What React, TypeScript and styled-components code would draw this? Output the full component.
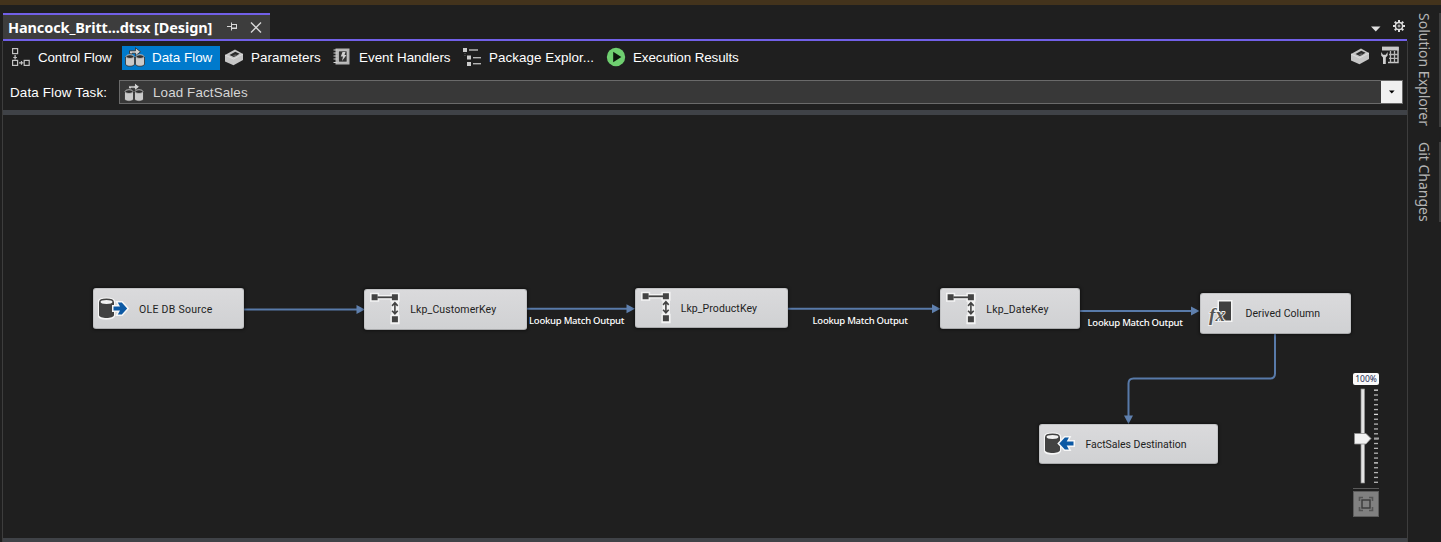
import React from "react";
import styled, { createGlobalStyle } from "styled-components";

const GlobalStyle = createGlobalStyle`
  * { box-sizing: border-box; }
  html, body { margin: 0; padding: 0; background: #1f1f1f; overflow: hidden; }
`;

const ui = `"Liberation Sans", Arial, sans-serif`;
const segoe = `"Noto Sans", "Open Sans", sans-serif`;

const Window = styled.div`
  width: 1441px;
  height: 542px;
  display: flex;
  flex-direction: column;
  background: #1f1f1f;
  color: #fff;
  font-family: ${ui};
  overflow: hidden;
`;

const TopStrip = styled.div`
  height: 5px;
  flex: none;
  background: #43331c;
`;

const Body = styled.div`
  flex: 1;
  display: flex;
  min-height: 0;
`;

const Editor = styled.main`
  width: 1408px;
  display: flex;
  flex-direction: column;
  padding: 8px 0 0 2px;
`;

const TabStrip = styled.div`
  height: 28px;
  flex: none;
  display: flex;
  justify-content: space-between;
  margin: 0 1px;
  border-bottom: 2px solid #7160e8;
`;

const DocumentTab = styled.div`
  width: 267px;
  height: 26px;
  display: flex;
  align-items: center;
  padding-left: 5px;
  border-top: 2px solid #7160e8;
  background: #3d3d3d;
`;

const Title = styled.span`
  width: 219px;
  font: 700 14.5px/24px ${segoe};
  letter-spacing: -0.11px;
  white-space: nowrap;
`;

const TabIcons = styled.div`
  display: flex;
  align-items: center;
  gap: 12px;
`;

const StripActions = styled.div`
  display: flex;
  align-items: center;
  gap: 12px;
  padding: 0 2px 0 0;
`;

const MenuArrow = styled.svg`
  margin-top: 3px;
`;

const Surface = styled.div`
  flex: 1;
  display: flex;
  flex-direction: column;
  border: solid #3d3d3d;
  border-width: 0 1px;
`;

const Toolbar = styled.div`
  height: 39px;
  flex: none;
  display: flex;
  align-items: flex-start;
  padding: 5px 7px 0 5px;
`;

const ViewTab = styled.button<{ $width: number; $active?: boolean; $ls?: number }>`
  width: ${(p) => p.$width}px;
  height: 24px;
  display: flex;
  align-items: center;
  gap: 7px;
  padding: 0 0 0 3px;
  border: 0;
  margin: 0 ${(p) => (p.$active ? 1 : 0)}px 0 0;
  background: ${(p) => (p.$active ? "#007acc" : "transparent")};
  color: #fff;
  font: 13.4px/20px ${ui};
  letter-spacing: ${(p) => p.$ls ?? 0}px;
  white-space: nowrap;
  text-align: left;
  svg { flex: none; margin-bottom: 2px; }
  span { padding-bottom: 1px; }
`;

const ToolbarActions = styled.div`
  margin-left: auto;
  display: flex;
  gap: 10px;
`;

const TaskRow = styled.div`
  height: 30px;
  flex: none;
  display: flex;
  padding: 0 4px 6px 7px;
`;

const TaskLabel = styled.label`
  width: 109px;
  font: 13.4px/25px ${ui};
  letter-spacing: 0.14px;
`;

const Combo = styled.div`
  flex: 1;
  display: flex;
  align-items: center;
  padding-left: 4px;
  gap: 9px;
  border: 1px solid #6a6a6a;
  background: #383838;
  color: #d6d6d6;
  font: 13.4px/20px ${ui};
  letter-spacing: 0.12px;
`;

const ComboText = styled.span`
  padding-top: 2px;
`;

const ComboButton = styled.div`
  margin-left: auto;
  width: 21px;
  height: 22px;
  display: grid;
  place-items: center;
  background: #f0f0f0;
`;

const Splitter = styled.div<{ $h: number }>`
  height: ${(p) => p.$h}px;
  flex: none;
  background: #3f4247;
`;

const Canvas = styled.section`
  flex: 1;
  position: relative;
  overflow: hidden;
`;

const Links = styled.svg`
  position: absolute;
  inset: 0;
`;

const NodeCard = styled.div<{ $x: number; $y: number; $w: number }>`
  position: absolute;
  left: ${(p) => p.$x}px;
  top: ${(p) => p.$y}px;
  width: ${(p) => p.$w}px;
  height: 40.7px;
  display: flex;
  align-items: center;
  gap: 5px;
  padding-left: 4px;
  border: 1px solid #c2c3c5;
  border-bottom-color: #a9aaac;
  border-radius: 3px;
  background: linear-gradient(#dadadc, #d0d1d3);
  box-shadow: 0 0 3px 1px rgba(0, 0, 0, 0.45);
  color: #1e1e1e;
  font: 10.5px/14px Roboto, sans-serif;
  white-space: nowrap;
`;

const NodeLabel = styled.span<{ $ls: number }>`
  padding-top: 2px;
  letter-spacing: ${(p) => p.$ls}px;
`;

const LinkLabel = styled.span<{ $x: number; $y: number }>`
  position: absolute;
  left: ${(p) => p.$x}px;
  top: ${(p) => p.$y}px;
  font: 500 9.5px/12px ${segoe};
  letter-spacing: -0.24px;
  white-space: nowrap;
`;

const ZoomPanel = styled.div`
  position: absolute;
  left: 1350px;
  top: 258px;
  width: 26px;
  display: flex;
  flex-direction: column;
`;

const ZoomValue = styled.div`
  height: 12px;
  border-radius: 2px;
  background: #fafafa;
  color: #1b2a52;
  font: 8.5px/11px ${segoe};
  text-align: center;
  white-space: nowrap;
`;

const FitButton = styled.div`
  height: 26px;
  margin-top: 2px;
  display: grid;
  place-items: center;
  border: 1px solid #5c5c5c;
  background: #808080;
`;

const SideRail = styled.aside`
  flex: 1;
  display: flex;
  flex-direction: column;
  align-items: flex-end;
  gap: 15px;
  padding-top: 8px;
`;

const SideTab = styled.div<{ $h: number }>`
  width: 26px;
  height: ${(p) => p.$h}px;
  border-right: 2px solid #3d3d3d;
  color: #b4b4b4;
  font: 14px/20px ${segoe};
  writing-mode: vertical-rl;
  white-space: nowrap;
  padding-right: 5px;
`;

const ControlFlowIcon = () => (
  <svg width="20" height="20" fill="none" stroke="#c4c4c4" strokeWidth="1.2">
    <rect x="1.6" y="1.6" width="5" height="5" />
    <rect x="1.6" y="13.4" width="5" height="5" />
    <rect x="13.2" y="13.4" width="5" height="5" />
    <path d="M4.1 8v4.500M2.300 10.500h3.600M8 15.900h4.500M10.500 14.100v3.600" />
  </svg>
);

const DataFlowIcon = () => (
  <svg width="20" height="20">
    <path d="M4.500 6.500V3.800h6V.8l5 4-5 4V6.200H7v1z" fill="#d0d0d0" stroke="#2b2b2b" strokeWidth="0.8" />
    {[0.5, 10.5].map((x) => (
      <g key={x}>
        <path d={`M${x} 10v7c0 3 9 3 9 0v-7z`} fill="#c9c9c9" stroke="#303030" strokeWidth="0.8" />
        <ellipse cx={x + 4.5} cy="9.6" rx="3.9" ry="1.9" fill="#303030" stroke="#bdbdbd" strokeWidth="0.9" />
      </g>
    ))}
  </svg>
);

const BoxIcon = () => (
  <svg width="20" height="20">
    <path d="M1 8l10-5.500 8 4.500v6l-9.500 5.200L1 14.500z" fill="#c6c6c6" />
    <path d="M5.500 8l5.800-3.200 4.300 2-5.800 3.200z" fill="#2a2a2a" />
    <path d="M8.500 8.800l2.800-1.600 2.200 1-2.800 1.500z" fill="#5c5c5c" />
    <path d="M1 8l8.500 4L19 7" fill="none" stroke="#e2e2e2" strokeWidth="0.8" />
  </svg>
);

const EventIcon = () => (
  <svg width="20" height="20">
    <rect x="3.5" y="1.500" width="14" height="16" fill="#b4b4b4" />
    <rect x="6.5" y="4" width="8.500" height="11" fill="#333" stroke="#d5d5d5" strokeWidth="0.6" />
    <path d="M1.500 3h4M1.500 6h4M1.500 9h4M1.500 12h4M1.500 15.500h4" stroke="#d0d0d0" strokeWidth="1.2" />
    <path d="M10.500 5h3l-1 3h2l-4.500 6 1-4.500H8.800z" fill="#cfcfcf" />
  </svg>
);

const ExplorerIcon = () => (
  <svg width="20" height="20">
    <rect x="1" y="1" width="4" height="4" fill="#ccc" />
    <rect x="7" y="2" width="9" height="2" fill="#8d8d8d" />
    <rect x="5" y="8.500" width="4" height="4" fill="#ccc" />
    <rect x="11" y="10" width="8" height="1.400" fill="#b5b5b5" />
    <rect x="5" y="15" width="4" height="4" fill="#ccc" />
    <rect x="11" y="16" width="8" height="1.400" fill="#b5b5b5" />
    <path d="M3 6v1M3 8v1" stroke="#666" />
  </svg>
);

const RunIcon = () => (
  <svg width="20" height="20">
    <circle cx="10" cy="10" r="9.200" fill="#6fcf70" />
    <path d="M7.200 4.800l8.200 5.200-8.200 5.200z" fill="#0c160c" />
  </svg>
);

const GridWrenchIcon = () => (
  <svg width="20" height="20">
    <path d="M2 1.500h16v15H8" fill="none" stroke="#c8c8c8" strokeWidth="1.400" />
    <path d="M2 .8h16.700v3.700H2z" fill="#c8c8c8" />
    <path d="M9 8.500h9M9 12.300h9M10.500 5v11.500M14.500 5v11.500" stroke="#b8b8b8" strokeWidth="1.300" />
    <path d="M1.200 6v3.500L3 11.500V18h2.800v-6.500l1.800-2V6L5.800 8.800H3z" fill="#cfcfcf" />
  </svg>
);

const PinIcon = () => (
  <svg width="11" height="10" fill="none" stroke="#d8d8d8">
    <path d="M0 4.500h4M4.500 .5v8M4.500 2.500h5v4h-5M4.500 6h5M9.500 2v5" />
  </svg>
);

const CloseIcon = () => (
  <svg width="12" height="11">
    <path d="M1 .5l10 10M11 .5l-10 10" stroke="#d8d8d8" strokeWidth="1.400" />
  </svg>
);

const GearIcon = () => (
  <svg width="12" height="12" fill="none" stroke="#dedede">
    {[0, 45, 90, 135, 180, 225, 270, 315].map((a) => (
      <path key={a} d="M6 0v2.200" strokeWidth="2" transform={`rotate(${a} 6 6)`} />
    ))}
    <circle cx="6" cy="6" r="3.600" strokeWidth="1.500" />
    <circle cx="6" cy="6" r="1" strokeWidth="0.900" />
  </svg>
);

const cylinder = (
  <>
    <path d="M1 9v13c0 4.500 15 4.500 15 0V9c0-4.500-15-4.500-15 0z" fill="#f6f6f6" stroke="#f6f6f6" strokeWidth="2.500" />
    <path d="M1 9v13c0 4 15 4 15 0V9z" fill="#424242" />
    <ellipse cx="8.500" cy="9" rx="6.700" ry="2.700" fill="#f2f2f2" stroke="#424242" strokeWidth="1.500" />
  </>
);

const SourceIcon = () => (
  <svg width="36" height="32">
    {cylinder}
    <path d="M15.500 13.600h6.500L19.800 9.500h4l5.400 6-5.400 6h-4l2.200-4.100H15.500z" fill="#0c59a4" stroke="#f6f6f6" strokeWidth="3" paintOrder="stroke" />
  </svg>
);

const DestinationIcon = () => (
  <svg width="36" height="32">
    {cylinder}
    <path d="M29.500 13.600h-6.800l2.200-4.100h-4l-5.600 6 5.600 6h4l-2.200-4.100H29.500z" fill="#0c59a4" stroke="#f6f6f6" strokeWidth="3" paintOrder="stroke" />
  </svg>
);

const LookupIcon = () => (
  <svg width="36" height="36">
    <g transform="translate(0.4 -0.7)">
      <path d="M5 7h22v23" fill="none" stroke="#f3f3f3" strokeWidth="4.500" />
      <path d="M.6 2.400h9.200v9H.6zM21 2.400h9.200v9H21zM21 24.500h9.200V34H21z" fill="#f3f3f3" />
      <path d="M22 11h7.500v14H22z" fill="#f3f3f3" />
      <path d="M2.200 4h6v6h-6zM22.500 4h6v6h-6zM22.500 26h6v6h-6z" fill="#434343" />
      <path d="M8 7h15" stroke="#434343" strokeWidth="1.800" />
      <path d="M25.500 12.500v11M22.700 15.600l2.800-3.100 2.800 3.100M22.700 20.400l2.800 3.100 2.800-3.100" fill="none" stroke="#434343" strokeWidth="1.600" />
    </g>
  </svg>
);

const FunctionText = styled.text`
  font: italic 700 19px "Liberation Serif", serif;
  letter-spacing: 0.2px;
`;

const DerivedIcon = () => (
  <svg width="36" height="32">
    <path d="M12.500 3h15v22h-15z" fill="#f5f5f5" />
    <path d="M14 4.500h12v19H14z" fill="#404040" />
    <FunctionText x="4" y="23.500" fill="#565656" stroke="#f0f0f0" strokeWidth="1.800" paintOrder="stroke">fx</FunctionText>
  </svg>
);

const nodes = [
  { label: "OLE DB Source", x: 90, y: 173.3, w: 151.3, Icon: SourceIcon, ls: 0.28 },
  { label: "Lkp_CustomerKey", x: 361.3, y: 174, w: 163, Icon: LookupIcon, ls: 0.12 },
  { label: "Lkp_ProductKey", x: 631.7, y: 172.5, w: 153.3, Icon: LookupIcon, ls: 0.08 },
  { label: "Lkp_DateKey", x: 937.3, y: 173.3, w: 140, Icon: LookupIcon, ls: 0.2 },
  { label: "Derived Column", x: 1196.5, y: 178, w: 151.5, Icon: DerivedIcon, ls: 0.06 },
  { label: "FactSales Destination", x: 1036.4, y: 308.5, w: 179, Icon: DestinationIcon, ls: -0.02 },
];

const ZoomSlider = () => (
  <svg width="26" height="104">
    <rect x="8" y="4" width="3.600" height="94" fill="#e4e4e4" stroke="#8a8a8a" strokeWidth="0.700" />
    {Array.from({ length: 20 }, (_, i) => (
      <rect key={i} x="21" y={4.5 + i * 4.85} width="4" height="1.3" fill={i % 5 === 0 ? "#ddd" : "#b4b4b4"} />
    ))}
    <rect x="21" y="52.500" width="5" height="2" fill="#a0a0a0" />
    <path d="M1.500 48.500h11.500l5 5-5 5.500H1.500z" fill="#f2f2f2" stroke="#8a8a8a" strokeWidth="0.800" />
    <path d="M0 103.500h26" stroke="#5a5a5a" />
  </svg>
);

export default function App() {
  return (
    <>
      <GlobalStyle />
      <Window>
        <TopStrip />
        <Body>
          <Editor>
            <TabStrip>
              <DocumentTab>
                <Title>Hancock_Britt...dtsx [Design]</Title>
                <TabIcons>
                  <PinIcon />
                  <CloseIcon />
                </TabIcons>
              </DocumentTab>
              <StripActions>
                <MenuArrow width="10" height="8"><path d="M0 2.500h9.500L4.800 7.500z" fill="#e0e0e0" /></MenuArrow>
                <GearIcon />
              </StripActions>
            </TabStrip>
            <Surface>
              <Toolbar>
                <ViewTab $width={114} $ls={-0.14}><ControlFlowIcon /><span>Control Flow</span></ViewTab>
                <ViewTab $width={98} $active><DataFlowIcon /><span>Data Flow</span></ViewTab>
                <ViewTab $width={108} $ls={0.06}><BoxIcon /><span>Parameters</span></ViewTab>
                <ViewTab $width={130}><EventIcon /><span>Event Handlers</span></ViewTab>
                <ViewTab $width={144} $ls={0.05}><ExplorerIcon /><span>Package Explor...</span></ViewTab>
                <ViewTab $width={144} $ls={-0.09}><RunIcon /><span>Execution Results</span></ViewTab>
                <ToolbarActions>
                  <BoxIcon />
                  <GridWrenchIcon />
                </ToolbarActions>
              </Toolbar>
              <TaskRow>
                <TaskLabel>Data Flow Task:</TaskLabel>
                <Combo>
                  <DataFlowIcon />
                  <ComboText>Load FactSales</ComboText>
                  <ComboButton>
                    <svg width="6" height="4"><path d="M0 .5h5.600L2.800 3.500z" fill="#000" /></svg>
                  </ComboButton>
                </Combo>
              </TaskRow>
              <Splitter $h={5} />
              <Canvas>
                <Links width="1404" height="423" fill="none" stroke="#587aa9" strokeWidth="2">
                  <path d="M241 194.500h114M524 193.700h101M785 193.700h146M1077 196h113M1272 219v39.500q0 5-5 5h-136.500q-5 0-5 5v33" />
                  <path
                    d="M353.500 190l8.500 4.500-8.500 4.500zM623.500 189.200l8.500 4.500-8.500 4.500zM929 189.200l8.500 4.500-8.500 4.500zM1188 191.500l8.500 4.500-8.500 4.500zM1121 300.500l4.500 8.500 4.500-8.500z"
                    fill="#5f80ae"
                    stroke="none"
                  />
                </Links>
                {nodes.map(({ label, x, y, w, Icon, ls }) => (
                  <NodeCard key={label} $x={x} $y={y} $w={w}>
                    <Icon />
                    <NodeLabel $ls={ls}>{label}</NodeLabel>
                  </NodeCard>
                ))}
                <LinkLabel $x={526} $y={200}>Lookup Match Output</LinkLabel>
                <LinkLabel $x={809.5} $y={200}>Lookup Match Output</LinkLabel>
                <LinkLabel $x={1084.5} $y={202}>Lookup Match Output</LinkLabel>
                <ZoomPanel>
                  <ZoomValue>100%</ZoomValue>
                  <ZoomSlider />
                  <FitButton>
                    <svg width="16" height="16" fill="none" stroke="#3a3a3a">
                      <rect x="4" y="4" width="8" height="8" strokeWidth="1.400" />
                      <path d="M1.500 5V1.500H5M11 1.500h3.500V5M14.500 11v3.500H11M5 14.500H1.500V11" strokeWidth="1.600" stroke="#555" />
                    </svg>
                  </FitButton>
                </ZoomPanel>
              </Canvas>
              <Splitter $h={4} />
            </Surface>
          </Editor>
          <SideRail>
            <SideTab $h={114}>Solution Explorer</SideTab>
            <SideTab $h={80}>Git Changes</SideTab>
          </SideRail>
        </Body>
      </Window>
    </>
  );
}
